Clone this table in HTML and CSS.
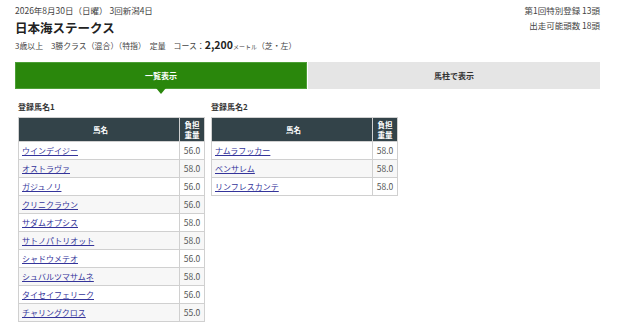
FILE: index.html
```html
<!DOCTYPE html>
<html lang="ja">
<head>
<meta charset="utf-8">
<title>日本海ステークス</title>
<link rel="stylesheet" href="styles.css">
</head>
<body>
<div class="page">
  <header class="race-head">
    <div class="race-info">
      <p class="race-date">2026年8月30日（日曜） 3回新潟4日</p>
      <h1 class="race-name">日本海ステークス</h1>
      <p class="race-cond">3歳以上　3勝クラス（混合）（特指）　定量　コース：<span class="dist">2,200</span><span class="unit">メートル</span>（芝・左）</p>
    </div>
    <div class="counts">
      <p>第1回特別登録 13頭</p>
      <p>出走可能頭数 18頭</p>
    </div>
  </header>

  <nav class="tabs">
    <a class="tab active" href="#">一覧表示</a>
    <a class="tab" href="#">馬柱で表示</a>
  </nav>

  <div class="groups">
    <section class="group">
      <h3 class="group-title">登録馬名1</h3>
      <table class="entry">
        <thead><tr><th class="c-name">馬名</th><th class="c-wt">負担<br>重量</th></tr></thead>
        <tbody>
          <tr><td class="c-name"><a href="#">ウインデイジー</a></td><td class="c-wt">56.0</td></tr>
          <tr><td class="c-name"><a href="#">オストラヴァ</a></td><td class="c-wt">58.0</td></tr>
          <tr><td class="c-name"><a href="#">ガジュノリ</a></td><td class="c-wt">56.0</td></tr>
          <tr><td class="c-name"><a href="#">クリニクラウン</a></td><td class="c-wt">56.0</td></tr>
          <tr><td class="c-name"><a href="#">サダムオプシス</a></td><td class="c-wt">58.0</td></tr>
          <tr><td class="c-name"><a href="#">サトノパトリオット</a></td><td class="c-wt">58.0</td></tr>
          <tr><td class="c-name"><a href="#">シャドウメテオ</a></td><td class="c-wt">56.0</td></tr>
          <tr><td class="c-name"><a href="#">シュバルツマサムネ</a></td><td class="c-wt">58.0</td></tr>
          <tr><td class="c-name"><a href="#">タイセイフェリーク</a></td><td class="c-wt">56.0</td></tr>
          <tr><td class="c-name"><a href="#">チャリングクロス</a></td><td class="c-wt">55.0</td></tr>
        </tbody>
      </table>
    </section>
    <section class="group">
      <h3 class="group-title">登録馬名2</h3>
      <table class="entry">
        <thead><tr><th class="c-name">馬名</th><th class="c-wt">負担<br>重量</th></tr></thead>
        <tbody>
          <tr><td class="c-name"><a href="#">ナムラフッカー</a></td><td class="c-wt">58.0</td></tr>
          <tr><td class="c-name"><a href="#">ベンサレム</a></td><td class="c-wt">58.0</td></tr>
          <tr><td class="c-name"><a href="#">リンフレスカンテ</a></td><td class="c-wt">58.0</td></tr>
        </tbody>
      </table>
    </section>
  </div>
</div>
</body>
</html>
```
FILE: styles.css
```css
* { box-sizing: border-box; }
html, body { margin: 0; padding: 0; background: #fff; }
body {
  font-family: "Noto Sans CJK JP", "Noto Sans", sans-serif;
  color: #333;
  font-size: 8px;
}
p, h1, h3 { margin: 0; }

.page {
  width: 600px;
  padding: 3px 0 0 15px;
}

.race-head {
  display: flex;
  justify-content: space-between;
  align-items: flex-start;
}
.race-info { display: flex; flex-direction: column; }
.race-date { height: 14px; line-height: 14px; font-size: 8.5px; color: #444; }
.race-name {
  height: 20px;
  margin-top: 1px;
  font-size: 12.5px;
  line-height: 20px;
  font-weight: bold;
  color: #222;
}
.race-cond { height: 14px; line-height: 14px; font-size: 7.9px; color: #444; }
.race-cond .dist { font-size: 10.5px; font-weight: bold; color: #222; line-height: 14px; }
.race-cond .unit { font-size: 6px; }

.counts { text-align: right; font-size: 8.5px; line-height: 15px; color: #444; }

.tabs {
  margin-top: 10px;
  display: grid;
  grid-template-columns: 1fr 1fr;
  gap: 1px;
  height: 27px;
}
.tab {
  display: flex;
  align-items: center;
  justify-content: center;
  font-weight: bold;
  font-size: 8px;
  text-decoration: none;
  color: #333;
  background: #e5e5e5;
}
.tab.active {
  position: relative;
  background: #2a870c;
  border: 1px solid #4c9f36;
  color: #fff;
}
.tab.active::after {
  content: "";
  position: absolute;
  left: 50%;
  top: 100%;
  margin-left: -5px;
  border-left: 5px solid transparent;
  border-right: 5px solid transparent;
  border-top: 6px solid #2a870c;
}

.groups {
  margin-top: 11px;
  padding-left: 3px;
  display: flex;
  gap: 6px;
  align-items: flex-start;
}
.group-title {
  font-size: 8px;
  line-height: 14px;
  font-weight: bold;
  color: #333;
  margin-bottom: 3px;
}
.entry {
  width: 187px;
  border-collapse: collapse;
  font-size: 8px;
}
.entry th, .entry td { border: 1px solid #d0d0d0; padding: 0; }
.entry th {
  background: #334349;
  color: #fff;
  font-weight: bold;
  line-height: 10px;
  height: 24px;
  font-size: 7.5px;
}
.entry td { line-height: 17px; height: 18px; }
.entry tbody tr:nth-child(even) td { background: #f7f7f7; }
.entry .c-name { text-align: left; padding-left: 3px; }
.entry th.c-name { text-align: center; }
.entry .c-wt { width: 25px; text-align: center; }
.entry td.c-wt { color: #555; font-size: 8.5px; }
.entry a { color: #34349a; text-decoration: underline; }
```
